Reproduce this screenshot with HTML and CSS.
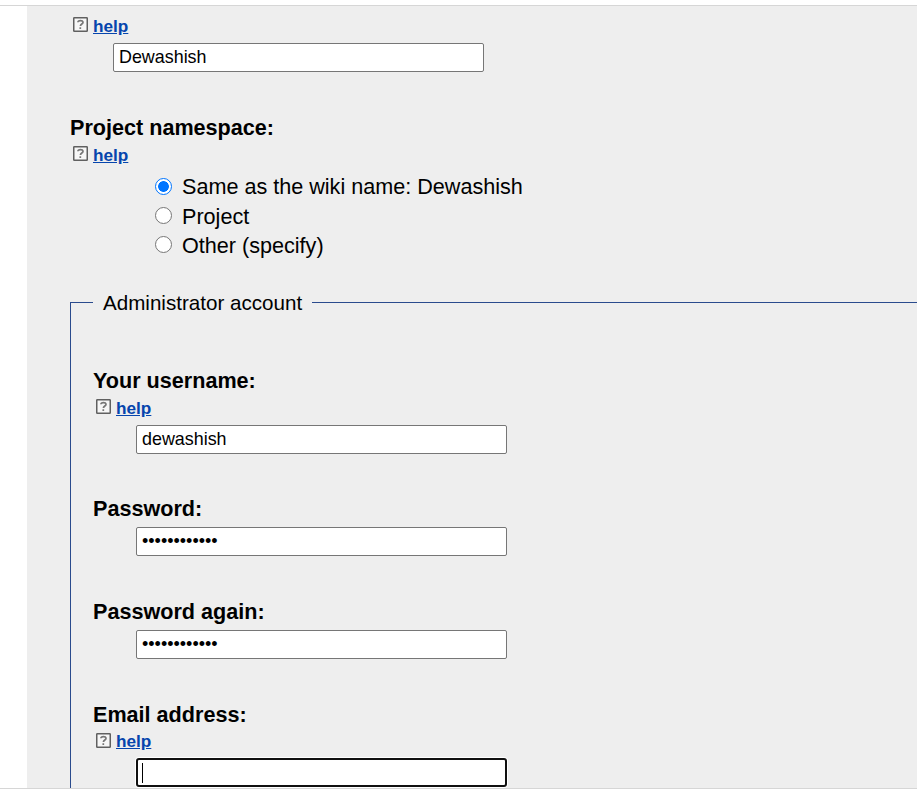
FILE: index.html
```
<!DOCTYPE html>
<html lang="en">
<head>
<meta charset="utf-8">
<title>Wiki setup</title>
<link rel="stylesheet" href="styles.css">
</head>
<body>
<svg class="defs" aria-hidden="true">
  <symbol id="help-icon" viewBox="0 0 15 15">
    <rect x=".75" y=".75" width="13.5" height="13.5" rx=".6" fill="#f7f7f7" stroke="#606060" stroke-width="1.5"/>
    <path d="M4.9 5.3C5 3 10.1 2.9 10 5.4C9.9 7 7.5 7 7.4 9M7.3 10.3V12" fill="none" stroke="#777" stroke-width="1.7"/>
  </symbol>
</svg>
<main class="frame">
  <form class="page">
    <div class="block block-first">
      <div class="help"><svg class="icon"><use href="#help-icon"/></svg><a href="#">help</a></div>
      <input class="text" type="text" value="Dewashish">
    </div>
    <div class="block block-namespace">
      <label class="label">Project namespace:</label>
      <div class="help"><svg class="icon"><use href="#help-icon"/></svg><a href="#">help</a></div>
      <div class="options">
        <label class="option"><span class="radio checked"></span>Same as the wiki name: Dewashish</label>
        <label class="option"><span class="radio"></span>Project</label>
        <label class="option"><span class="radio"></span>Other (specify)</label>
      </div>
    </div>
    <section class="account">
      <div class="legend"><span>Administrator account</span></div>
      <div class="fields">
        <div class="block block-user">
          <label class="label">Your username:</label>
          <div class="help"><svg class="icon"><use href="#help-icon"/></svg><a href="#">help</a></div>
          <input class="text" type="text" value="dewashish">
        </div>
        <div class="block block-password">
          <label class="label">Password:</label>
          <div class="text dots">••••••••••••</div>
        </div>
        <div class="block block-password">
          <label class="label">Password again:</label>
          <div class="text dots">••••••••••••</div>
        </div>
        <div class="block block-email">
          <label class="label">Email address:</label>
          <div class="help"><svg class="icon"><use href="#help-icon"/></svg><a href="#">help</a></div>
          <div class="text focused"><span class="caret"></span></div>
        </div>
      </div>
    </section>
  </form>
</main>
</body>
</html>
```
FILE: styles.css
```
* { box-sizing: border-box; }
body {
  margin: 0;
  padding-top: 5px;
  background: #fff;
  color: #000;
  font: 21.6px/30px "Liberation Sans", Arial, sans-serif;
  overflow: hidden;
}
.defs { display: none; }
.frame {
  height: 784px;
  border-top: 1px solid #d6d6d6;
  border-bottom: 1px solid #d6d6d6;
  padding-left: 27px;
  overflow: hidden;
}
.page {
  height: 782px;
  padding: 9px 0 0 43px;
  background: #eee;
  overflow: hidden;
}
.block { display: flex; flex-direction: column; align-items: flex-start; }
.block-first { height: 97px; }
.block-namespace { height: 190px; }
.block-user { height: 128px; }
.block-password { height: 103px; }
.label { height: 32px; line-height: 31px; font-weight: bold; }
.help {
  display: flex;
  gap: 5px;
  height: 28px;
  padding-left: 3px;
  font-size: 17.2px;
  font-weight: bold;
  line-height: 23px;
}
.icon { width: 15px; height: 15px; margin-top: 2px; }
.help a { color: #0645ad; text-decoration: underline; }
.text {
  width: 371px;
  height: 29px;
  margin: 0 0 0 43px;
  padding: 0 5px;
  border: 1px solid #767676;
  border-radius: 2px;
  background: #fff;
  color: #000;
  font: 17.9px "Liberation Sans", Arial, sans-serif;
}
.options { padding: 0 0 0 85px; }
.option { display: flex; align-items: center; height: 29.4px; }
.radio {
  width: 17px;
  height: 17px;
  margin-right: 10px;
  border: 1px solid #767676;
  border-radius: 50%;
  background: #fff;
}
.option + .option { padding-top: 1px; }
.option + .option .radio { margin-bottom: 3px; }
.radio.checked {
  border-color: #0075ff;
  background: radial-gradient(circle, #0075ff 5px, #fff 5.7px);
}
.account { display: flow-root; border-left: 1px solid #2a4b8d; }
.legend {
  display: flex;
  align-items: center;
  height: 30px;
  margin: -15px 0 0 -1px;
  font-size: 20.6px;
}
.legend::before, .legend::after { content: ""; height: 1px; background: #2a4b8d; }
.legend::before { width: 23px; }
.legend::after { flex: 1; }
.legend span { padding: 2px 10px 0; }
.fields { padding: 48px 0 10px 22px; }
.block-password .text { margin-top: 2px; }
.block-email .label { height: 31px; }
.block-email .icon { margin-top: 3px; }
.dots { font-size: 18px; line-height: 27px; }
.focused {
  padding: 3px 3px;
  border: 2px solid #101010;
  border-radius: 3px;
  box-shadow: 0 0 0 1px #fff;
}
.caret { display: block; width: 1px; height: 20px; margin-left: 1px; background: #000; }
```
